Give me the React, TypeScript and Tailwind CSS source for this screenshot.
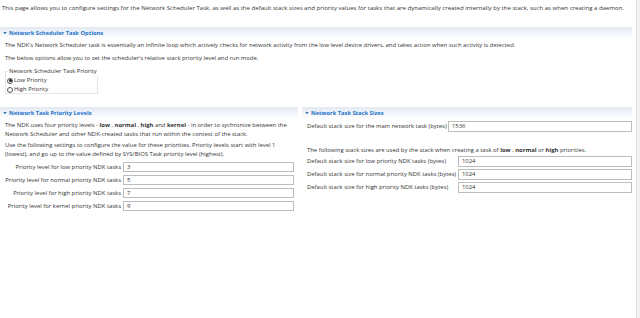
const font = { fontFamily: '"Open Sans", "Liberation Sans", sans-serif' };

function SectionHeader({ title }: { title: string }) {
    return (
        <div className="h-[12px] flex items-center gap-[2px] pl-[3px] bg-gradient-to-b from-[#e3e9f2] to-white">
            <svg width="4" height="4" viewBox="0 0 4 4"><path d="M0.3 1 L3.7 1 L2 3.2 Z" fill="#2f6db5" /></svg>
            <span className="font-bold text-[#2172c9] text-[5.75px] whitespace-nowrap">{title}</span>
        </div>
    );
}

function Field({ label, value, labelClass }: { label: string; value: string; labelClass: string }) {
    return (
        <div className="flex items-center h-[10px]">
            <span className={labelClass}>{label}</span>
            <div className="flex-1 h-[10px] border border-[#bdbdbd] bg-white flex items-center pl-[3px]">{value}</div>
        </div>
    );
}

export default function App() {
    const priorities = [
        { label: 'Priority level for low priority NDK tasks', value: '3' },
        { label: 'Priority level for normal priority NDK tasks', value: '5' },
        { label: 'Priority level for high priority NDK tasks', value: '7' },
        { label: 'Priority level for kernel priority NDK tasks', value: '9' },
    ];
    const stacks = [
        { label: 'Default stack size for low priority NDK tasks (bytes)', value: '1024' },
        { label: 'Default stack size for normal priority NDK tasks (bytes)', value: '1024' },
        { label: 'Default stack size for high priority NDK tasks (bytes)', value: '1024' },
    ];

    return (
        <div className="w-[640px] h-[318px] flex bg-white text-[#333] text-[5.9px] leading-[9px] overflow-hidden" style={font}>
            <div className="flex-1 pr-[4px]">
                <p className="pl-[2px] pt-[4px] h-[27px] whitespace-nowrap text-[6.05px]">
                    This page allows you to configure settings for the Network Scheduler Task, as well as the default stack sizes and priority values for tasks that are dynamically created internally by the stack, such as when creating a daemon.
                </p>

                <SectionHeader title="Network Scheduler Task Options" />
                <div className="pl-[5px]">
                    <p className="h-[13px] flex items-center whitespace-nowrap">
                        The NDK's Network Scheduler task is essentially an infinite loop which actively checks for network activity from the low level device drivers, and takes action when such activity is detected.
                    </p>
                    <p className="h-[12px] flex items-center whitespace-nowrap">
                        The below options allow you to set the scheduler's relative stack priority level and run mode.
                    </p>
                    <div className="w-[93px] h-[23px] border border-[#e6e6e6] mt-[7px] relative">
                        <div className="absolute -top-[5px] left-[2px] bg-white px-[1px] whitespace-nowrap">Network Scheduler Task Priority</div>
                        <div className="pt-[4px] pl-[1px] flex flex-col">
                            <div className="flex items-center gap-[1px] h-[9px] whitespace-nowrap">
                                <span className="w-[6px] h-[6px] shrink-0 rounded-full border border-[#555] flex items-center justify-center">
                                    <span className="w-[3px] h-[3px] rounded-full bg-[#222]" />
                                </span>
                                <span>Low Priority</span>
                            </div>
                            <div className="flex items-center gap-[1px] h-[9px] whitespace-nowrap">
                                <span className="w-[6px] h-[6px] shrink-0 rounded-full border border-[#555]" />
                                <span>High Priority</span>
                            </div>
                        </div>
                    </div>
                </div>

                <div className="flex gap-[4px] mt-[13px]">
                    <div className="w-[298px]">
                        <SectionHeader title="Network Task Priority Levels" />
                        <div className="pl-[5px] pr-[2px] pt-[2px] whitespace-nowrap">
                            <p>
                                The NDK uses four priority levels - <b>low</b> , <b>normal</b> , <b>high</b> and <b>kernel</b> - in order to sychronize between the
                                <br />
                                Network Scheduler and other NDK-created tasks that run within the context of the stack.
                            </p>
                            <p className="mt-[2px]">
                                Use the following settings to configure the value for these priorities. Priority levels start with level 1
                                <br />
                                (lowest), and go up to the value defined by SYS/BIOS Task priority level (highest).
                            </p>
                        </div>
                        <div className="flex flex-col gap-[3px] mt-[3px] pr-[4px]">
                            {priorities.map((p, index) => (
                                <Field key={index} label={p.label} value={p.value} labelClass="w-[123px] pr-[2px] text-right whitespace-nowrap" />
                            ))}
                        </div>
                    </div>

                    <div className="flex-1">
                        <SectionHeader title="Network Task Stack Sizes" />
                        <div className="pl-[5px] pt-[2px] flex flex-col">
                            <div className="flex items-center h-[11px]">
                                <span className="w-[141px] whitespace-nowrap">Default stack size for the main network task (bytes)</span>
                                <div className="flex-1 h-[11px] border border-[#bdbdbd] bg-white flex items-center pl-[3px]">1536</div>
                            </div>
                            <p className="mt-[14px] whitespace-nowrap">
                                The following stack sizes are used by the stack when creating a task of <b>low</b> , <b>normal</b> or <b>high</b> priorities.
                            </p>
                            <div className="flex flex-col gap-[2px] mt-[1px]">
                                {stacks.map((s, index) => (
                                    <div key={index} className="flex items-center h-[11px]">
                                        <span className="w-[151px] whitespace-nowrap">{s.label}</span>
                                        <div className="flex-1 h-[11px] border border-[#bdbdbd] bg-white flex items-center pl-[3px]">{s.value}</div>
                                    </div>
                                ))}
                            </div>
                        </div>
                    </div>
                </div>
            </div>
            <div className="w-[4px] border-l border-[#e2e2e2] bg-[#f3f3f3]" />
        </div>
    );
}
